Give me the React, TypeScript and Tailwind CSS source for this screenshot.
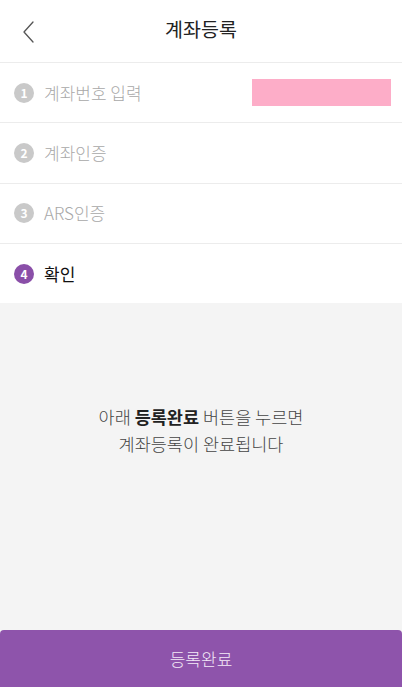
const steps = [
  { no: 1, label: "계좌번호 입력", active: false },
  { no: 2, label: "계좌인증", active: false },
  { no: 3, label: "ARS인증", active: false },
  { no: 4, label: "확인", active: true },
]

export default function App() {
  return (
    <div
      className="flex h-[687px] w-[402px] flex-col bg-white font-light"
      style={{ fontFamily: '"Noto Sans CJK KR", "Noto Sans", sans-serif' }}
    >
      {/* Header */}
      <div className="relative flex h-[62px] shrink-0 items-center justify-center">
        <button className="absolute left-[18px] top-[16px] p-1">
          <svg width="14" height="24" viewBox="0 0 14 24" fill="none">
            <path d="M11 2 L2 12 L11 22" stroke="#555" strokeWidth="1.3" strokeLinecap="round" strokeLinejoin="round" />
          </svg>
        </button>
        <h1 className="mt-[-5px] text-[19.5px] font-normal text-[#222]">계좌등록</h1>
      </div>

      {/* Steps */}
      {steps.map((s) => (
        <div key={s.no} className="flex h-[60.3px] shrink-0 items-center border-t border-[#ececec] pl-[14px] pr-[11px]">
          <span
            className={`flex h-[20px] w-[20px] items-center justify-center rounded-full text-[12px] font-bold text-white ${
              s.active ? "bg-[#8a4fa8]" : "bg-[#c9c9c9]"
            }`}
          >
            {s.no}
          </span>
          <span className={`ml-[10px] text-[17px] ${s.active ? "font-normal text-[#111]" : "text-[#a8a8a8]"}`}>{s.label}</span>
          {s.no === 1 && <div className="ml-auto h-[27px] w-[139px] bg-[#fdadc8]" />}
        </div>
      ))}

      {/* Message */}
      <div className="flex flex-1 flex-col items-center bg-[#f4f4f4] pt-[100px] text-[17.5px] leading-[27px] text-[#444]">
        <p>
          아래 <span className="font-bold text-[#222]">등록완료</span> 버튼을 누르면
        </p>
        <p>계좌등록이 완료됩니다</p>
      </div>

      {/* Bottom button */}
      <div className="bg-[#f4f4f4]">
        <button className="flex h-[57px] w-full items-center justify-center rounded-t-[4px] bg-[#8e54ab] text-[17px] text-[#f3eaf7]">
          등록완료
        </button>
      </div>
    </div>
  )
}
